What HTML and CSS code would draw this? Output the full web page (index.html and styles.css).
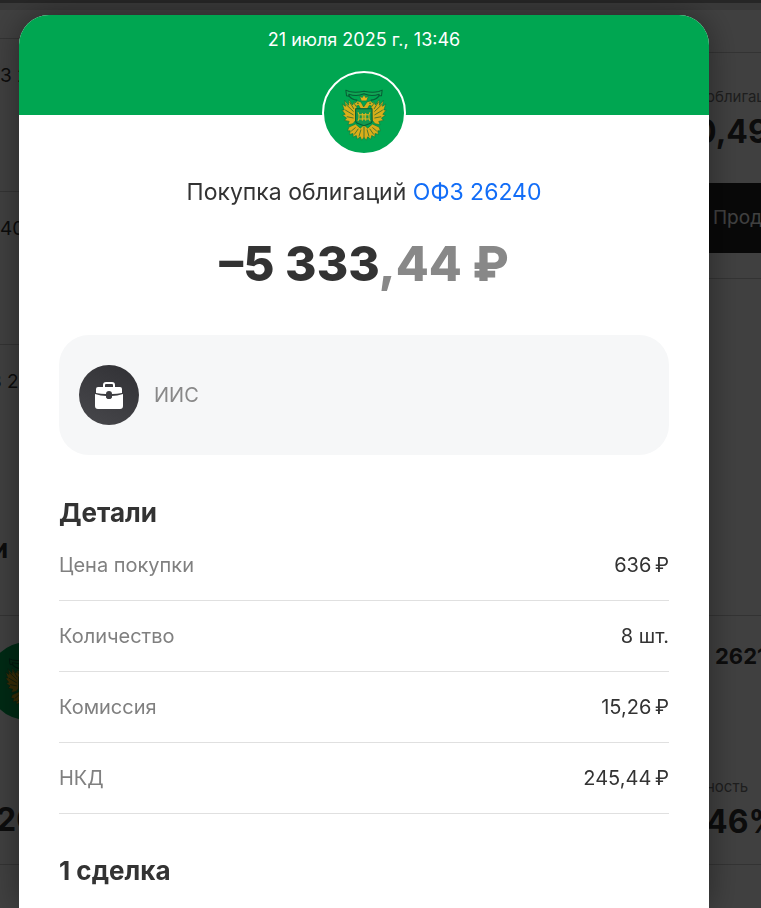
FILE: index.html
```html
<!DOCTYPE html>
<html lang="ru">
<head>
<meta charset="utf-8">
<meta name="viewport" content="width=device-width, initial-scale=1">
<title>Покупка облигаций ОФЗ 26240</title>
<link rel="stylesheet" href="styles.css">
</head>
<body>
<svg class="defs" aria-hidden="true">
  <symbol id="emblem" viewBox="43 36 238 238">
    <g stroke="#0b7a40" stroke-width="2" stroke-linejoin="round">
      <path fill="#d9ae1a" d="M141 136 L133 121 L128 131 L117 115 L116 132 L104 117 L107 135 L97 128 L103 146 L96 146 L106 159 L98 162 L110 170 L104 177 L118 180 L114 190 L129 187 L138 176Z"/>
      <path fill="#d9ae1a" d="M183 136 L191 121 L196 131 L207 115 L208 132 L220 117 L217 135 L227 128 L221 146 L228 146 L218 159 L226 162 L214 170 L220 177 L206 180 L210 190 L195 187 L186 176Z"/>
      <path fill="#d9ae1a" d="M152 143 L146 132 L138 135 L133 127 L143 119 L153 122 L161 137 L171 122 L181 119 L191 127 L186 135 L178 132 L172 143Z"/>
      <path fill="#e5b51c" d="M154 119 L149 105 L157 109 L162 100 L167 109 L175 105 L170 119Z"/>
      <path fill="#d9ae1a" d="M137 188 L117 197 L113 208 L121 208 L119 219 L129 216 L130 227 L139 222 L142 233 L151 226 L155 236 L162 228 L169 236 L173 226 L182 233 L185 222 L194 227 L195 216 L205 219 L203 208 L211 208 L207 197 L187 188 L173 200 L162 190 L151 200Z"/>
      <path fill="#12a554" stroke="#075c35" d="M108 87 L118 91 Q138 96 162 90 Q187 96 206 91 L216 87 L214 104 L207 104 L207 99 Q184 107 162 98 Q140 107 117 99 L117 105 L110 104Z" stroke-width="3"/>
      <path fill="#12994e" stroke="#075c35" d="M137 142 H186 V178 Q186 185 178 187 L162 193 L146 187 Q137 185 137 178Z" stroke-width="3"/>
    </g>
    <g fill="none" stroke="#075c35" stroke-width="2">
      <path d="M108 129 L131 151 M106 146 L131 161 M111 166 L131 170 M119 122 L132 143 M216 129 L193 151 M218 146 L193 161 M213 166 L193 170 M205 122 L192 143"/>
      <path d="M137 198 L124 209 M145 202 L133 219 M153 204 L147 225 M162 196 V229 M171 204 L177 225 M179 202 L191 219 M187 198 L200 209"/>
      <path stroke-width="4" d="M117 103 Q124 116 142 117 M207 103 Q200 116 182 117"/>
    </g>
    <g fill="none" stroke="#e5b51c" stroke-width="3">
      <path d="M144 153 Q151 165 144 179 M180 153 Q173 165 180 179 M148 160 H176 M148 173 H176 M157 155 V178 M167 155 V178 M162 158 V174"/>
    </g>
    <g fill="#075c35"><circle cx="144" cy="126" r="2"/><circle cx="180" cy="126" r="2"/></g>
  </symbol>
</svg>

<div class="page" aria-hidden="true">
  <div class="topbar"></div>
  <div class="columns">
    <div class="list">
      <div class="item">З 2</div>
      <div class="item">40</div>
      <div class="item"><span class="cut">З</span> 26</div>
      <div class="section">и</div>
      <div class="bond">
        <div class="bond-logo"><svg><use href="#emblem"/></svg></div>
        <div class="bond-value">20</div>
      </div>
    </div>
    <div class="summary">
      <div class="panel">
        <div class="caption">облигации</div>
        <div class="big">0,49</div>
        <div class="sell">Продать</div>
      </div>
      <div class="gap"></div>
      <div class="card">
        <div class="name">26218</div>
        <div class="caption yield">ность</div>
        <div class="big rate">46%</div>
      </div>
    </div>
  </div>
</div>

<div class="overlay">
  <main class="modal" role="dialog" aria-labelledby="title">
    <header class="head">
      <time datetime="2025-07-21T13:46">21 июля 2025 г., 13:46</time>
      <div class="avatar"><svg aria-hidden="true"><use href="#emblem"/></svg></div>
    </header>
    <div class="body">
      <h1 class="title" id="title">Покупка облигаций <a href="#bond">ОФЗ 26240</a></h1>
      <p class="amount">–5 333<span>,44 ₽</span></p>
      <div class="account">
        <div class="account-icon">
          <svg viewBox="0 0 60 60" aria-hidden="true">
            <path d="M25 23 V20 Q25 18 27 18 H33 Q35 18 35 20 V23" fill="none" stroke="#fff" stroke-width="2"/>
            <path d="M19 22 H41 Q43 22 43 24 V28 Q38 29 33 29 A3 3 0 0 0 27 29 Q22 29 17 28 V24 Q17 22 19 22Z" fill="#fff"/>
            <path d="M16 29 Q22 31 27 31 A3 3 0 0 0 33 31 Q38 31 44 29 V41 Q44 44 41 44 H19 Q16 44 16 41Z" fill="#fff"/>
            <circle cx="30" cy="31" r="3" fill="#3c3c40"/>
          </svg>
        </div>
        <span>ИИС</span>
      </div>
      <h2>Детали</h2>
      <dl class="details">
        <div><dt>Цена покупки</dt><dd>636&thinsp;₽</dd></div>
        <div><dt>Количество</dt><dd>8 шт.</dd></div>
        <div><dt>Комиссия</dt><dd>15,26&thinsp;₽</dd></div>
        <div><dt>НКД</dt><dd>245,44&thinsp;₽</dd></div>
      </dl>
      <h2>1 сделка</h2>
    </div>
  </main>
</div>
</body>
</html>
```
FILE: styles.css
```css
* { box-sizing: border-box; }
html, body { height: 100%; }
body {
  margin: 0;
  overflow: hidden;
  background: #fff;
  color: #333;
  font-family: Inter, "Liberation Sans", sans-serif;
}
h1, h2, p, dl, dt, dd { margin: 0; }
.defs { display: none; }

.page { height: 100%; overflow: hidden; color: #333; }
.topbar { height: 10px; background: #e4e4e4; border-top: 3px solid #999; }
.columns { display: flex; justify-content: space-between; }
.list { width: 48px; overflow: hidden; white-space: nowrap; padding-top: 28px; }
.item {
  height: 153px;
  padding-top: 24px;
  border-top: 1px solid #ccc;
  font-size: 19px;
  line-height: 26px;
}
.cut { margin-left: -10px; }
.section {
  height: 118px;
  margin-left: -8px;
  padding-top: 36px;
  font-size: 26px;
  font-weight: 700;
  line-height: 32px;
}
.bond {
  height: 250px;
  padding-top: 26px;
  border-top: 1px solid #ccc;
  border-bottom: 1px solid #ccc;
}
.bond-logo {
  width: 78px;
  height: 78px;
  margin-left: -12px;
  border-radius: 50%;
  background: #00a651;
}
.bond-logo svg { display: block; width: 78px; height: 78px; }
.bond-value {
  margin: 80px 0 0 -4px;
  font-size: 32px;
  font-weight: 700;
  line-height: 40px;
}
.summary { width: 60px; overflow: hidden; white-space: nowrap; padding-top: 42px; }
.panel { height: 226px; padding-top: 34px; border-top: 1px solid #ccc; }
.caption { margin-left: 5px; color: #777; font-size: 15px; line-height: 20px; }
.big { margin-left: -6px; font-size: 32px; font-weight: 700; line-height: 50px; }
.rate { margin-left: 5px; }
.sell {
  height: 70px;
  margin-top: 26px;
  padding-left: 12px;
  background: #222;
  color: #fff;
  font-size: 19px;
  line-height: 70px;
}
.gap { height: 337px; border-top: 1px solid #ccc; }
.card { height: 250px; padding-top: 24px; border-top: 1px solid #ccc; border-bottom: 1px solid #ccc; }
.name { margin-left: 14px; font-size: 22px; font-weight: 700; line-height: 32px; }
.yield { margin-top: 105px; }

.overlay {
  position: fixed;
  inset: 0;
  padding: 15px 52px 0 19px;
  background: rgba(0, 0, 0, 0.75);
}
.modal {
  min-height: 100%;
  border-radius: 30px 30px 0 0;
  background: #fff;
  box-shadow: 0 0 32px rgba(0, 0, 0, 0.4);
}
.head {
  display: flex;
  flex-direction: column;
  align-items: center;
  height: 100px;
  padding-top: 13px;
  border-radius: 30px 30px 0 0;
  background: #00a651;
  color: #fff;
  font-size: 18px;
  line-height: 24px;
}
.avatar {
  flex: none;
  width: 84px;
  height: 84px;
  margin-top: 19px;
  border: 2px solid #fff;
  border-radius: 50%;
  background: #00a651;
}
.avatar svg { display: block; width: 80px; height: 80px; }
.body { padding: 61px 40px 0; }
.title { text-align: center; font-size: 23px; font-weight: 400; line-height: 32px; }
.title a { color: #126df7; text-decoration: none; }
.amount {
  margin-top: 26px;
  text-align: center;
  font-size: 48px;
  font-weight: 800;
  line-height: 60px;
}
.amount span { color: #888; }
.account {
  display: flex;
  align-items: center;
  gap: 15px;
  height: 120px;
  margin: 41px 0 40px;
  padding: 0 20px;
  border-radius: 30px;
  background: #f6f7f8;
  color: #888;
  font-size: 20px;
}
.account-icon {
  width: 60px;
  height: 60px;
  border-radius: 50%;
  background: linear-gradient(30deg, #48484c, #303034);
}
.account-icon svg { display: block; }
h2 { font-size: 26px; font-weight: 700; line-height: 35px; }
.details { margin-bottom: 39px; }
.details div {
  display: flex;
  justify-content: space-between;
  height: 71px;
  align-items: center;
  border-bottom: 1px solid #e0e0e0;
  font-size: 20px;
  line-height: 28px;
}
.details dt { color: #808080; }
```
